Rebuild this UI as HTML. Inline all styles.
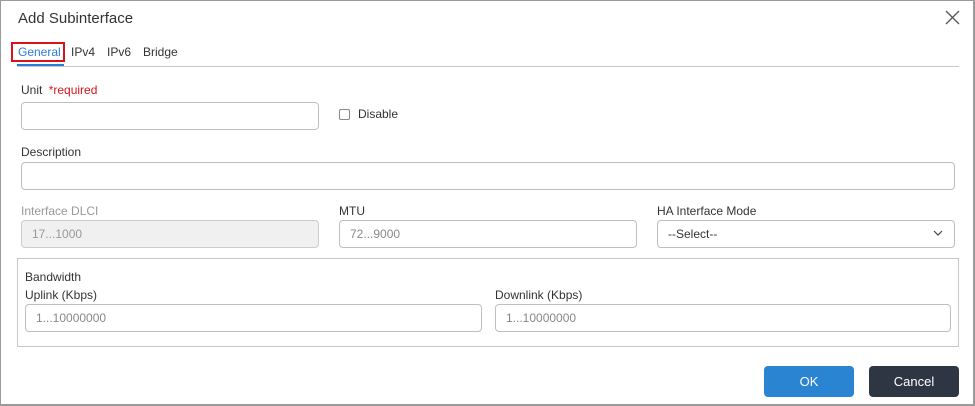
<!DOCTYPE html><html><head><style>
*{box-sizing:border-box;margin:0;padding:0}
body{width:975px;height:406px;background:#fff;font-family:"Liberation Sans",sans-serif;position:relative;overflow:hidden;color:#333}
.frame{position:absolute;left:0;top:0;width:975px;height:406px;border:1px solid #9a9a9a;border-right-width:2px;border-bottom-width:2px}
.a{position:absolute;white-space:nowrap}
.lbl{font-size:12px;color:#333}
.in{position:absolute;height:28px;border:1px solid #bfbfbf;border-radius:4px;background:#fff;font-size:12px;color:#888;padding-left:10px;line-height:26px}
</style></head><body>
<div class="frame"></div>
<div class="a" style="left:18px;top:10px;font-size:15px;color:#333">Add Subinterface</div>
<svg class="a" style="left:945px;top:10px" width="15" height="15"><path d="M1 1L14 14M14 1L1 14" stroke="#555" stroke-width="1.3"/></svg>
<div class="a" style="left:18px;top:45px;font-size:12px;color:#2a7dd6">General</div>
<div class="a" style="left:11px;top:42px;width:54px;height:20px;border:2px solid #d9131c"></div>
<div class="a" style="left:71px;top:45px;font-size:12px">IPv4</div>
<div class="a" style="left:107px;top:45px;font-size:12px">IPv6</div>
<div class="a" style="left:143px;top:45px;font-size:12px">Bridge</div>
<div class="a" style="left:17px;top:64px;width:47px;height:2px;background:#2a7dd6"></div>
<div class="a" style="left:17px;top:66px;width:942px;height:1px;background:#c8c8c8"></div>
<div class="a lbl" style="left:21px;top:83px">Unit <span style="color:#d9131c;margin-left:3px">*required</span></div>
<div class="in" style="left:21px;top:102px;width:298px"></div>
<div class="a" style="left:339px;top:109px;width:11px;height:11px;border:1px solid #888;border-radius:2px"></div>
<div class="a lbl" style="left:358px;top:107px">Disable</div>
<div class="a lbl" style="left:21px;top:145px">Description</div>
<div class="in" style="left:21px;top:162px;width:934px"></div>
<div class="a lbl" style="left:21px;top:204px;color:#999">Interface DLCI</div>
<div class="in" style="left:21px;top:220px;width:298px;background:#f0f0f0;color:#999;border-color:#ccc">17...1000</div>
<div class="a lbl" style="left:339px;top:204px">MTU</div>
<div class="in" style="left:339px;top:220px;width:298px">72...9000</div>
<div class="a lbl" style="left:657px;top:204px">HA Interface Mode</div>
<div class="in" style="left:657px;top:220px;width:298px;color:#333">--Select--</div>
<svg class="a" style="left:933px;top:230px" width="10" height="7"><path d="M1 1L5 5L9 1" stroke="#444" stroke-width="1.2" fill="none"/></svg>
<div class="a" style="left:17px;top:258px;width:942px;height:89px;border:1px solid #c8c8c8"></div>
<div class="a lbl" style="left:25px;top:270px">Bandwidth</div>
<div class="a lbl" style="left:25px;top:288px">Uplink (Kbps)</div>
<div class="in" style="left:25px;top:304px;width:457px">1...10000000</div>
<div class="a lbl" style="left:495px;top:288px">Downlink (Kbps)</div>
<div class="in" style="left:495px;top:304px;width:456px">1...10000000</div>
<div class="a" style="left:764px;top:366px;width:90px;height:31px;background:#2a84d2;border-radius:4px;color:#fff;font-size:13px;text-align:center;line-height:31px">OK</div>
<div class="a" style="left:869px;top:366px;width:90px;height:31px;background:#2f3643;border-radius:4px;color:#fff;font-size:13px;text-align:center;line-height:31px">Cancel</div>
</body></html>
